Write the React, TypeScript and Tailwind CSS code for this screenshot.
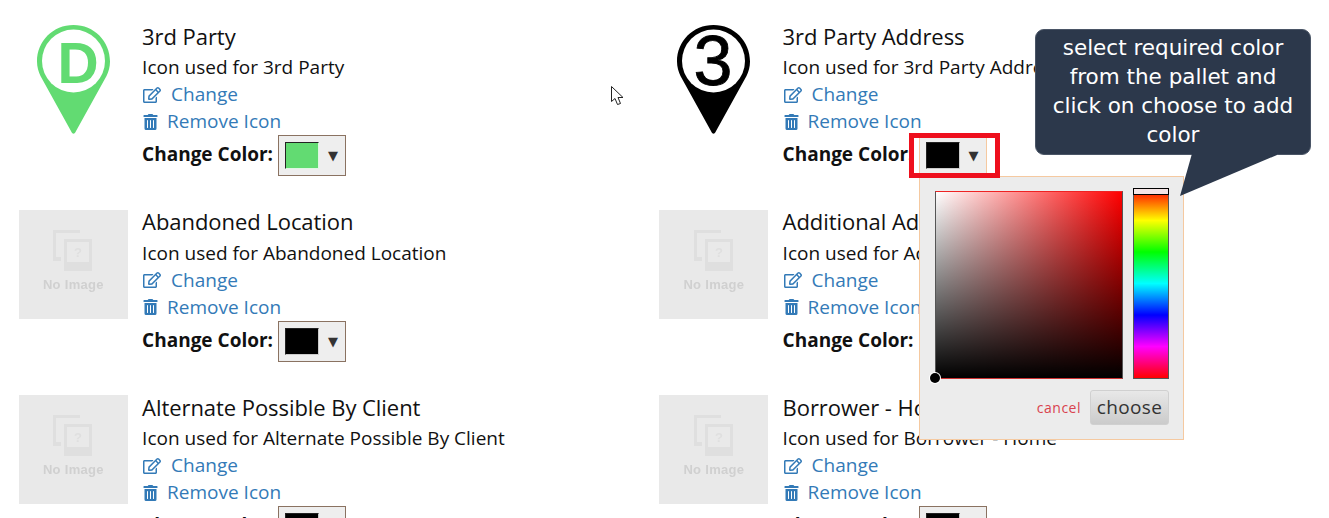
import { FaRegEdit, FaTrashAlt } from 'react-icons/fa'

type Row = { title: string; color: string; pin?: 'D' | '3'; swatch: string; active?: boolean }

const rows: Row[] = [
  { title: '3rd Party', color: '#62db72', pin: 'D', swatch: '#62db72' },
  { title: '3rd Party Address', color: '#000', pin: '3', swatch: '#000', active: true },
  { title: 'Abandoned Location', color: '#000', swatch: '#000' },
  { title: 'Additional Address', color: '#000', swatch: '#000' },
  { title: 'Alternate Possible By Client', color: '#000', swatch: '#000' },
  { title: 'Borrower - Home', color: '#000', swatch: '#000' },
]

// map pin with a letter or number set in the ring
function Pin({ color, label }: { color: string; label: string }) {
  const isD = label === 'D'
  return (
    <svg width="109" height="109" viewBox="0 0 109 109" className="mt-[1px] overflow-visible">
      <path
        d="M54.500 0C34 0 18 16 18 36.500C18 42 19.500 47 21.500 51L52.500 107C53.500 109.300 55.500 109.300 56.500 107L87.500 51C89.500 47 91 42 91 36.500C91 16 75 0 54.500 0Z"
        fill={color}
      />
      <circle cx="54.5" cy="36" r="31.500" fill="#fff" />
      <text
        x={isD ? 59 : 54}
        y={isD ? 58 : 60}
        textAnchor="middle"
        fill={color}
        stroke={isD ? 'none' : color}
        strokeWidth={isD ? 0 : 0.8}
        fontFamily="'Liberation Sans', sans-serif"
        fontWeight={isD ? 700 : 400}
        fontSize={isD ? 57 : 70}
      >
        {label}
      </text>
    </svg>
  )
}

function NoImage() {
  return (
    <div className="flex h-[109px] w-[109px] flex-col items-center bg-[#e9e9e9] pt-5">
      <svg width="40" height="42" viewBox="0 0 40 42" className="blur-[0.7px]">
        <path d="M0 0H27V3H3V27H8V31H0Z" fill="#dfdfdf" />
        <path fillRule="evenodd" d="M11 9H39V41H11ZM14 12V32H36V12Z" fill="#dfdfdf" />
        <text x="25" y="27" textAnchor="middle" fontSize="13" fontWeight="700" fill="#dfdfdf" fontFamily="'Liberation Sans', sans-serif">?</text>
      </svg>
      <span className="mt-[5px] text-[13px] leading-4 font-bold tracking-[0.3px] text-[#d0d0d0] blur-[0.6px] [font-family:'Liberation_Sans',sans-serif]">
        No Image
      </span>
    </div>
  )
}

function Entry({ row }: { row: Row }) {
  return (
    <div className="flex h-[185.5px] items-start">
      <div className="h-[109px] w-[109px] shrink-0">
        {row.pin ? <Pin color={row.color} label={row.pin} /> : <NoImage />}
      </div>
      <div className="mt-[-1.5px] ml-[14.2px] flex flex-col text-[#111]">
        <div className="h-[31.5px] text-[22px] leading-[26px] tracking-[-0.06px] whitespace-nowrap">{row.title}</div>
        <div className="h-[27px] text-[19px] leading-[26px] whitespace-nowrap">Icon used for {row.title}</div>
        <a className="flex h-[26.5px] items-center text-[19px] leading-[27px] text-[#337ab7]">
          <FaRegEdit className="mr-[10px] ml-[1px] h-[18px] w-[18px]" />
          Change
        </a>
        <a className="flex h-[27.5px] items-center text-[19px] leading-[27px] text-[#337ab7]">
          <FaTrashAlt className="mr-[9px] ml-[1px] h-[16px] w-[15px]" />
          Remove Icon
        </a>
        <div className="flex h-[41px] items-center">
          <span className="mr-[5px] mb-[3px] w-[131px] text-[19px] font-bold whitespace-nowrap">Change Color:</span>
          <div
            className={`flex h-[41px] w-[68px] items-center border bg-[#eeeeee] pl-[6px] ${
              row.active ? 'border-y-0 border-[#f5c9a0]' : 'border-[#8a7261]'
            }`}
          >
            <div className="h-[27px] w-[34px] border border-[#222] border-r-white/80 border-b-white/80" style={{ background: row.swatch }} />
            <span className="ml-[9px] text-[13px] leading-none text-[#333] [font-family:'DejaVu_Sans',sans-serif]">▼</span>
          </div>
        </div>
      </div>
    </div>
  )
}

export default function App() {
  return (
    <div className="relative h-[518px] w-[1329px] overflow-hidden bg-white [font-family:'Open_Sans',sans-serif]">
      <div className="grid grid-cols-[640.5px_640.5px] pt-[24.25px] pl-[18.9px]">
        {rows.map((row) => (
          <Entry key={row.title} row={row} />
        ))}
      </div>

      {/* mouse pointer */}
      <svg className="absolute top-[85px] left-[610px]" width="16" height="22" viewBox="0 0 16 22">
        <path d="M1.500 1.500V16.500L5 13.500L7.500 19.500L10.500 18.500L8 12.500H13Z" fill="#fff" stroke="#222" strokeWidth="1" />
      </svg>

      {/* colour picker */}
      <div className="absolute top-[176px] left-[919px] h-[264px] w-[265px] border border-[#f5c9a0] bg-[#ececec]">
        <div className="absolute top-[14px] left-[15px] h-[188px] w-[188px] border border-[#555] border-t-[#e22] border-b-[#c33] bg-[linear-gradient(to_top,#000,transparent),linear-gradient(to_right,#fff,#f00)]">
          <div className="absolute -bottom-[5px] -left-[6px] h-[10px] w-[10px] rounded-full bg-black ring-1 ring-white" />
        </div>
        <div className="absolute top-[11px] left-[213px] h-[191px] w-[36px] border border-[#555] bg-[linear-gradient(to_bottom,#f00,#ff0,#0f0,#0ff,#00f,#f0f,#f00)]">
          <div className="absolute -top-px -left-px h-[7px] w-[36px] border border-black bg-[#f4e4e4]" />
        </div>
        <div className="absolute top-[213px] right-[14px] flex items-center">
          <span className="mr-[9px] text-[14px] tracking-[0.5px] text-[#d9434e]">cancel</span>
          <button className="h-[35px] w-[79px] rounded-[3px] border border-[#d0d0d0] bg-[linear-gradient(to_bottom,#e8e8e8,#cbcbcb)] text-[19px] leading-none tracking-[0.4px] text-[#333]">
            choose
          </button>
        </div>
      </div>

      {/* highlight round the swatch */}
      <div className="absolute top-[133px] left-[909px] h-[45px] w-[91px] border-[5px] border-[#ee0f1d]" />

      {/* callout */}
      <div className="absolute top-[29px] left-[1035px] flex h-[126px] w-[276px] items-center justify-center rounded-[9px] border border-[#4a5566] bg-[#2c384b] px-[16px] pb-[2px] text-center text-[21.5px] leading-[29px] text-white [font-family:'DejaVu_Sans',sans-serif]">
        select required color from the pallet and click on choose to add color
      </div>
      <svg className="absolute top-[150px] left-[1175px]" width="110" height="50" viewBox="0 0 110 50">
        <path d="M18 0L5 46L102 5V0Z" fill="#2c384b" />
      </svg>
    </div>
  )
}
